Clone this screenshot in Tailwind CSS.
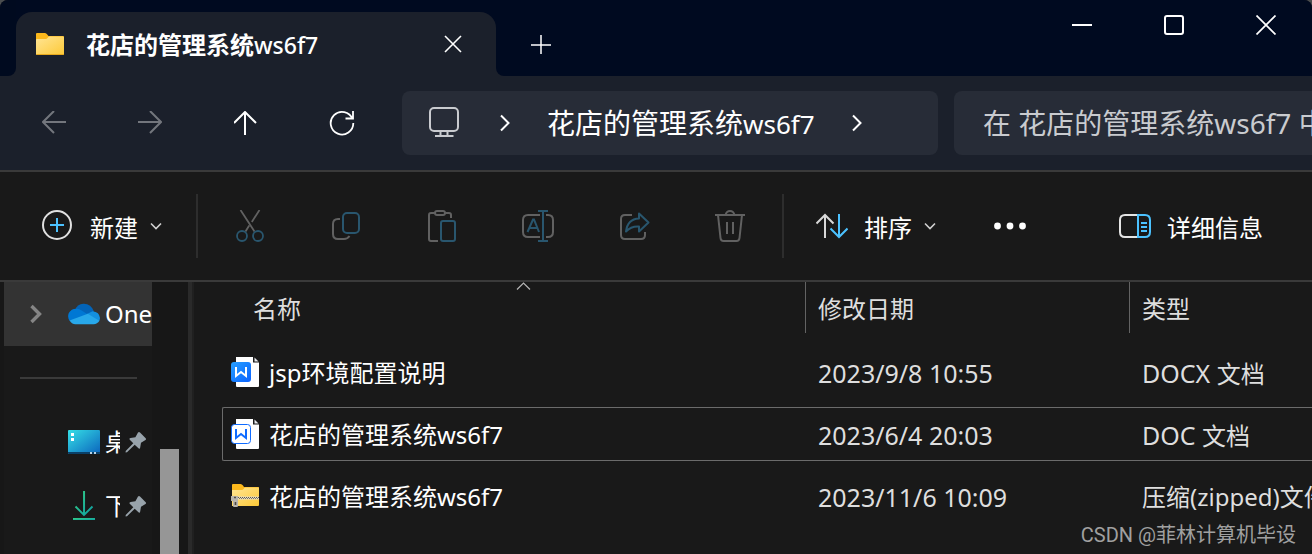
<!DOCTYPE html>
<html lang="zh-CN">
<head>
    <meta charset="UTF-8" />
    <meta name="viewport" content="width=device-width, initial-scale=1" />
    <title>花店的管理系统ws6f7</title>
    <script src="https://cdn.jsdelivr.net/npm/@tailwindcss/browser@4"></script>
</head>
<body class="h-screen overflow-hidden bg-[#4a4d4f] font-['Noto_Sans','Noto_Sans_CJK_SC',sans-serif] text-2xl text-white">
    <!-- shared icons -->
    <svg class="absolute h-0 w-0">
        <defs>
            <linearGradient id="folder-fill" x1="0" y1="0" x2="1" y2="1">
                <stop offset="0" stop-color="#ffe595" />
                <stop offset="1" stop-color="#fdc937" />
            </linearGradient>
            <linearGradient id="word-fill" x1="0" y1="0" x2="1" y2="1">
                <stop offset="0" stop-color="#27a0ff" />
                <stop offset="1" stop-color="#0a62ff" />
            </linearGradient>
            <linearGradient id="desktop-fill" x1="0" y1="0" x2="1" y2="1">
                <stop offset="0" stop-color="#35dfe6" />
                <stop offset="1" stop-color="#0b64bd" />
            </linearGradient>
            <linearGradient id="download-fill" x1="0" y1="0" x2="1" y2="1">
                <stop offset="0" stop-color="#35cf83" />
                <stop offset="1" stop-color="#0d9fa5" />
            </linearGradient>
        </defs>
        <symbol id="icon-pin" viewBox="0 0 22 22">
            <path d="M13 1.5Q14 .6 15 1.5L20.7 7.2Q21.6 8.2 20.5 9L16 11.8L15.2 16.4Q14.8 18.6 13.2 17L9.7 13.7L2 21.3L.6 21.4L.7 20L8.3 12.3L5 9Q3.6 7.6 5.6 7L10.4 6.2Z" fill="#98a3ab" />
        </symbol>
        <symbol id="icon-down" viewBox="0 0 12 8">
            <path d="M1 1.5L6 6.5L11 1.5" fill="none" stroke="#d0d0d0" stroke-width="1.6" />
        </symbol>
    </svg>

    <div class="flex h-full flex-col overflow-hidden rounded-t-lg bg-[#191919]">
        <!-- title bar -->
        <header class="flex h-[76px] shrink-0 bg-[#1b202b]">
            <div class="w-4 rounded-br-lg bg-[#000a1f]"></div>
            <div class="w-[480px] bg-[#000a20] pt-3">
                <div class="flex h-16 items-center rounded-t-2xl bg-[#1b202b] pl-5">
                    <svg class="h-6 w-7 shrink-0" viewBox="0 0 28 24">
                        <path d="M0 2Q0 1 1 1H8.5Q10 1 11 2.2L12.5 4H27Q28 4 28 5V9H0Z" fill="#fcb81c" />
                        <path d="M0 8Q0 7 1 7H9.5Q11 7 12 5.500Q12.600 4.600 13.500 4.600H27Q28 4.600 28 5.600V22Q28 23 27 23H1Q0 23 0 22Z" fill="url(#folder-fill)" />
                        <path d="M.5 22.500H27.500" stroke="#e8a91d" />
                    </svg>
                    <span class="ml-[22px] flex-1 pt-0.5 font-bold leading-8 whitespace-nowrap">花店的管理系统<span class="text-[23px] font-medium">ws6f7</span></span>
                    <button class="mr-3 flex h-12 w-[62px] items-center justify-center" aria-label="关闭标签页">
                        <svg class="h-[18px] w-[18px]" viewBox="0 0 18 18"><path d="M1 1L17 17M17 1L1 17" stroke="#fff" stroke-width="1.600" /></svg>
                    </button>
                </div>
            </div>
            <div class="flex flex-1 items-start rounded-bl-lg bg-[#000a20]">
                <button class="mt-3 flex h-16 w-[90px] items-center justify-center" aria-label="新标签页">
                    <svg class="h-5 w-5" viewBox="0 0 20 20"><path d="M10 1V20M0 11H20" stroke="#fff" stroke-width="1.500" /></svg>
                </button>
                <div class="ml-auto flex h-[50px]">
                    <button class="flex w-[92px] items-center justify-center" aria-label="最小化">
                        <svg class="h-5 w-5" viewBox="0 0 20 20"><path d="M0 10H20" stroke="#fff" stroke-width="2" /></svg>
                    </button>
                    <button class="flex w-[92px] items-center justify-center" aria-label="最大化">
                        <svg class="h-5 w-5" viewBox="0 0 20 20"><rect x="1" y="1" width="18" height="18" rx="2" fill="none" stroke="#fff" stroke-width="2" /></svg>
                    </button>
                    <button class="flex w-[92px] items-center justify-center" aria-label="关闭">
                        <svg class="h-5 w-5" viewBox="0 0 20 20"><path d="M.5 .5L19.500 19.500M19.500 .5L.5 19.500" stroke="#fff" stroke-width="1.700" /></svg>
                    </button>
                </div>
            </div>
        </header>

        <!-- navigation -->
        <nav class="flex h-[94px] shrink-0 items-center bg-[#1b202b] pl-1.5">
            <button class="flex h-16 w-24 shrink-0 items-center justify-center" aria-label="后退" disabled>
                <svg class="h-6 w-6" viewBox="0 0 24 24"><path d="M24 11H1M12 0L1 11L12 22" fill="none" stroke="#73767d" stroke-width="2" /></svg>
            </button>
            <button class="flex h-16 w-24 shrink-0 items-center justify-center" aria-label="前进" disabled>
                <svg class="h-6 w-6" viewBox="0 0 24 24"><path d="M0 11H23M12 0L23 11L12 22" fill="none" stroke="#73767d" stroke-width="2" /></svg>
            </button>
            <button class="flex h-16 w-24 shrink-0 items-center justify-center" aria-label="向上">
                <svg class="h-6 w-6" viewBox="0 0 24 24"><path d="M11 24V1M0 12L11 1L22 12" fill="none" stroke="#fff" stroke-width="2" /></svg>
            </button>
            <button class="flex h-16 w-24 shrink-0 items-center justify-center" aria-label="刷新">
                <svg class="h-[26px] w-[26px]" viewBox="0 0 26 26"><path d="M23.500 9A11.300 11.300 0 1 0 24.300 13M24 1V8.500H16.500" fill="none" stroke="#fff" stroke-width="1.800" /></svg>
            </button>
            <div class="ml-3 flex h-16 min-w-0 flex-1 items-center rounded-lg bg-[#272c37] pl-[27px]">
                <svg class="h-8 w-[30px] shrink-0" viewBox="0 0 30 32" fill="none" stroke="#c9cbcf" stroke-width="2">
                    <rect x="1" y="1" width="28" height="23" rx="4" />
                    <path d="M11.500 24V28.500M18.500 24V28.500M6 29H24.500" />
                </svg>
                <svg class="ml-10 h-[18px] w-3 shrink-0" viewBox="0 0 12 18"><path d="M2 1.500L9.500 9L2 16.500" fill="none" stroke="#fff" stroke-width="2" /></svg>
                <a href="#" class="ml-9 text-[28px] leading-10 whitespace-nowrap">花店的管理系统<span class="text-[26px]">ws6f7</span></a>
                <svg class="ml-9 h-[18px] w-3 shrink-0" viewBox="0 0 12 18"><path d="M2 1.500L9.500 9L2 16.500" fill="none" stroke="#fff" stroke-width="2" /></svg>
            </div>
            <input type="text" aria-label="搜索" placeholder="在 花店的管理系统ws6f7 中搜索" class="ml-4 h-16 w-[358px] shrink-0 rounded-l-lg bg-[#272c37] pl-[29px] text-[28px] placeholder-[#c9cbcf] outline-none" />
        </nav>

        <!-- toolbar -->
        <div class="flex h-28 shrink-0 items-center border-y-2 border-[#3a3a3a] bg-[#191919]">
            <button class="flex h-16 w-[196px] shrink-0 items-center pl-[42px]">
                <svg class="h-8 w-[30px]" viewBox="0 0 30 32" fill="none">
                    <circle cx="15" cy="15" r="14" stroke="#e0e0e0" stroke-width="2" />
                    <path d="M15 8V22M8 15H22" stroke="#4cc2ff" stroke-width="2" />
                </svg>
                <span class="ml-[18px] pt-1 leading-8">新建</span>
                <svg class="ml-3 h-2 w-3"><use href="#icon-down" /></svg>
            </button>
            <div class="mr-1 h-16 w-0.5 shrink-0 bg-[#2d2d2d]"></div>
            <button class="flex h-16 w-24 shrink-0 items-center justify-center" aria-label="剪切" disabled>
                <svg class="h-8 w-8" viewBox="0 0 32 32" fill="none" stroke-width="1.800">
                    <path d="M6.500 0L20.500 21.500M25.500 0L17.800 12M15.200 15.500L11.500 21.500" stroke="#616161" />
                    <circle cx="8" cy="26" r="5" stroke="#29566e" />
                    <circle cx="24" cy="26" r="5" stroke="#29566e" />
                </svg>
            </button>
            <button class="flex h-16 w-24 shrink-0 items-center justify-center" aria-label="复制" disabled>
                <svg class="h-8 w-8" viewBox="0 0 32 32" fill="none" stroke-width="2">
                    <path d="M10 9H8Q3 9 3 14V24Q3 29 8 29H14Q17.500 29 19.500 26" stroke="#616161" />
                    <rect x="13" y="3" width="16" height="20" rx="4" stroke="#29566e" />
                </svg>
            </button>
            <button class="flex h-16 w-24 shrink-0 items-center justify-center" aria-label="粘贴" disabled>
                <svg class="h-8 w-8" viewBox="0 0 32 32" fill="none" stroke-width="2">
                    <path d="M9 3H5Q3 3 3 5V29Q3 31 5 31H12M19 3H23Q25 3 25 5V8" stroke="#616161" />
                    <rect x="9" y="1" width="10" height="4" rx="2" stroke="#616161" />
                    <rect x="15" y="11" width="14" height="20" rx="2" stroke="#29566e" />
                </svg>
            </button>
            <button class="flex h-16 w-24 shrink-0 items-center justify-center" aria-label="重命名" disabled>
                <svg class="h-8 w-8" viewBox="0 0 32 32" fill="none" stroke-width="2">
                    <path d="M18 5H6Q1 5 1 10V22Q1 27 6 27H18M24 5H26Q31 5 31 10V22Q31 27 26 27H24" stroke="#616161" />
                    <path d="M21 1V31M16 1H26M16 31H26" stroke="#29566e" />
                    <path d="M5.500 22L11 9.500H12L17 22M7.500 18H15.500" stroke="#29566e" />
                </svg>
            </button>
            <button class="flex h-16 w-24 shrink-0 items-center justify-center" aria-label="共享" disabled>
                <svg class="h-8 w-8" viewBox="0 0 32 32" fill="none" stroke-width="2">
                    <path d="M14 5H7Q3 5 3 9V25Q3 29 7 29H23Q27 29 27 25V22" stroke="#616161" />
                    <path d="M21 3.500L30.500 12.500L21 21.500V16.500Q13 16 8 21.500Q9.500 9 21 8.500Z" stroke="#29566e" stroke-linejoin="round" />
                </svg>
            </button>
            <button class="flex h-16 w-24 shrink-0 items-center justify-center" aria-label="删除" disabled>
                <svg class="h-8 w-8" viewBox="0 0 32 32" fill="none" stroke="#616161" stroke-width="2">
                    <path d="M1 5H31M11.500 5Q12.500 1 16 1Q19.500 1 20.500 5M4 5L6.500 28Q6.800 31 9.500 31H22.500Q25.200 31 25.500 28L28 5M13 12V24M19 12V24" />
                </svg>
            </button>
            <div class="ml-1 h-16 w-0.5 shrink-0 bg-[#2d2d2d]"></div>
            <button class="ml-8 flex h-16 shrink-0 items-center">
                <svg class="h-8 w-8" viewBox="0 0 32 32" fill="none" stroke-width="2">
                    <path d="M9 28V5M.5 13.500L9 5L17.500 13.500" stroke="#d8d8d8" />
                    <path d="M23 4V27M14.500 18.500L23 27L31.500 18.500" stroke="#4cc2ff" />
                </svg>
                <span class="ml-4 pt-1 leading-8">排序</span>
                <svg class="ml-3 h-2 w-3"><use href="#icon-down" /></svg>
            </button>
            <button class="ml-[50px] flex h-16 w-12 shrink-0 items-center justify-center" aria-label="查看更多">
                <svg class="h-2 w-8" viewBox="0 0 32 8" fill="#fff"><circle cx="3.500" cy="4" r="3.400" /><circle cx="16" cy="4" r="3.400" /><circle cx="28.500" cy="4" r="3.400" /></svg>
            </button>
            <button class="mr-[49px] ml-auto flex h-16 shrink-0 items-center">
                <svg class="h-8 w-8" viewBox="0 0 32 32" fill="none" stroke-width="2">
                    <path d="M19 5H6Q1 5 1 10V22Q1 27 6 27H19" stroke="#e4e4e4" />
                    <path d="M19 5H26Q31 5 31 10V22Q31 27 26 27H19ZM22 13H28M22 17H28M22 21H28" stroke="#4cc2ff" />
                </svg>
                <span class="ml-4 pt-1 leading-8">详细信息</span>
            </button>
        </div>

        <div class="flex min-h-0 flex-1">
            <!-- sidebar -->
            <aside class="flex w-[188px] shrink-0 overflow-hidden bg-[#171717] pl-1">
                <div class="w-[148px] overflow-hidden bg-[#191919]">
                    <a href="#" class="flex h-16 items-center bg-[#333333] pl-6">
                        <svg class="h-5 w-4 shrink-0" viewBox="0 0 16 20"><path d="M3.500 2L11.500 10L3.500 18" fill="none" stroke="#858585" stroke-width="3.400" /></svg>
                        <svg class="ml-6 h-[22px] w-8 shrink-0" viewBox="0 0 32 22">
                            <path d="M7 7Q9 1 15.500 .7Q23 .5 26 8.500L19 13Z" fill="#0364b8" />
                            <path d="M1.800 18Q-1 14.500 .8 10Q3.500 5.200 9.500 5.800Q12 6.200 14 7.800L20 11.500L8 17Z" fill="#0078d4" />
                            <path d="M19 11L24.500 8.200Q31.500 9 32 15Q31.800 17 31 18.500L20 14Z" fill="#1490df" />
                            <path d="M1.600 17.500L19.800 10.700L31.300 17.800Q29.500 21.200 25.500 21.300H7.500Q3.500 21 1.600 17.500Z" fill="#28a8ea" />
                        </svg>
                        <span class="ml-[5px] leading-8 whitespace-nowrap">OneDrive</span>
                    </a>
                    <div class="flex h-16 items-center pr-[15px] pl-4"><div class="h-0.5 w-full bg-[#3a3a3a]"></div></div>
                    <a href="#" class="flex h-16 items-center pl-16">
                        <svg class="h-6 w-8 shrink-0" viewBox="0 0 32 24">
                            <rect width="32" height="24" rx="1" fill="url(#desktop-fill)" />
                            <path d="M0 22H32V23Q32 24 31 24H1Q0 24 0 23Z" fill="#0a4068" />
                            <path d="M3 3H6V6H3ZM3 8H6V11H3Z" fill="#fff" />
                            <path d="M22 22H24V24H22ZM26 22H28V24H26Z" fill="#b9d3e6" />
                        </svg>
                        <span class="ml-[5px] w-[15px] shrink-0 overflow-hidden leading-8 whitespace-nowrap">桌面</span>
                        <svg class="ml-[5px] h-[22px] w-[22px] shrink-0"><use href="#icon-pin" /></svg>
                    </a>
                    <a href="#" class="flex h-16 items-center pl-16">
                        <svg class="h-8 w-8 shrink-0" viewBox="0 0 32 32" fill="none">
                            <path d="M16 2V25H16.100V2ZM7.500 16.500L16 25L24.500 16.500" stroke="url(#download-fill)" stroke-width="1.900" />
                            <path d="M5 28H27V30H5Z" fill="url(#download-fill)" />
                        </svg>
                        <span class="ml-[5px] w-[15px] shrink-0 overflow-hidden leading-8 whitespace-nowrap">下载</span>
                        <svg class="ml-[5px] h-[22px] w-[22px] shrink-0"><use href="#icon-pin" /></svg>
                    </a>
                </div>
                <!-- scrollbar -->
                <div class="ml-2 w-[19px] pt-[167px]"><div class="h-full bg-[#969696]"></div></div>
            </aside>
            <div class="w-1.5 shrink-0 border-l-4 border-[#2a2a2a] bg-[#202020]"></div>

            <!-- file list -->
            <main class="relative min-w-0 flex-1 overflow-hidden pl-7">
                <svg class="absolute top-0 left-[322px] h-2 w-4" viewBox="0 0 16 8"><path d="M1 7.500L7.500 1L14 7.500" fill="none" stroke="#b5b5b5" stroke-width="1.200" /></svg>
                <table class="w-full table-fixed border-separate border-spacing-0 whitespace-nowrap text-[#dedede]">
                    <colgroup>
                        <col class="w-[584px]" />
                        <col class="w-[324px]" />
                        <col />
                    </colgroup>
                    <thead>
                        <tr class="h-[59px] text-left">
                            <th class="p-0 align-top font-normal"><div class="flex h-[51px] items-center border-r border-[#636363] pt-0.5 pl-[31px] leading-8">名称</div></th>
                            <th class="p-0 align-top font-normal"><div class="flex h-[51px] items-center border-r border-[#636363] pt-0.5 pl-3 leading-8">修改日期</div></th>
                            <th class="p-0 align-top font-normal"><div class="flex h-[51px] items-center pt-0.5 pl-3 leading-8">类型</div></th>
                        </tr>
                    </thead>
                    <tbody>
                        <tr class="h-[62px]">
                            <td class="p-0 text-white">
                                <div class="flex h-[54px] items-center border border-transparent pl-2">
                                    <svg class="h-8 w-7 shrink-0" viewBox="0 0 28 32">
                                        <path d="M5 1H22V6.500H28V30Q28 31 27 31H6Q5 31 5 30Z" fill="#fff" />
                                        <path d="M23.500 1.500L27.500 5.500H23.500Z" fill="#e8eaee" />
                                        <rect y="6" width="20" height="20" rx="3" fill="url(#word-fill)" />
                                        <path d="M5 11V20L10 16L15 20V11" fill="none" stroke="#fff" stroke-width="2" />
                                    </svg>
                                    <a href="#" class="ml-2.5 pt-0.5 leading-8">jsp环境配置说明</a>
                                </div>
                            </td>
                            <td class="p-0"><div class="flex h-[54px] items-center pt-0.5 pl-3 text-[25px] leading-8">2023/9/8 10:55</div></td>
                            <td class="p-0"><div class="h-[54px] pt-3 pl-3 leading-8"><span class="text-[25px]">DOCX </span>文档</div></td>
                        </tr>
                        <!-- focused row -->
                        <tr class="h-[62px]">
                            <td class="p-0 text-white">
                                <div class="flex h-[54px] items-center rounded-l-xs border border-r-0 border-[#6b6b6b] pl-2">
                                    <svg class="h-8 w-7 shrink-0" viewBox="0 0 28 32">
                                        <path d="M5 1H22V6.500H28V30Q28 31 27 31H6Q5 31 5 30Z" fill="#fff" />
                                        <path d="M23.500 1.500L27.500 5.500H23.500Z" fill="#e8eaee" />
                                        <rect x=".5" y="6.500" width="19" height="19" rx="3" fill="#fff" stroke="#0f6bff" />
                                        <path d="M5 11V20L10 16L15 20V11" fill="none" stroke="#0f6bff" stroke-width="2" />
                                    </svg>
                                    <a href="#" class="ml-2.5 pt-0.5 leading-8">花店的管理系统ws6f7</a>
                                </div>
                            </td>
                            <td class="p-0"><div class="flex h-[54px] items-center border-y border-[#6b6b6b] pt-0.5 pl-3 text-[25px] leading-8">2023/6/4 20:03</div></td>
                            <td class="p-0"><div class="h-[54px] border-y border-[#6b6b6b] pt-[11px] pl-3 leading-8"><span class="text-[25px]">DOC </span>文档</div></td>
                        </tr>
                        <tr class="h-[62px]">
                            <td class="p-0 text-white">
                                <div class="flex h-[54px] items-center border border-transparent pl-2">
                                    <svg class="h-6 w-7 shrink-0" viewBox="0 0 28 24">
                                        <path d="M1 1Q1 0 2 0H9.500Q11 0 12 1.500L13 3H27Q28 3 28 4V8H1Z" fill="#fcb81c" />
                                        <path d="M1 6H10.500Q12 6 13 4.500Q13.500 3.500 14.500 3.500H28V21Q28 22 27 22H1Z" fill="url(#folder-fill)" />
                                        <path d="M5 12.500H28V15.500H5Z" fill="#e6dcc0" />
                                        <path d="M7 13.500H28" stroke="#5d594f" stroke-dasharray="1 1" />
                                        <path d="M8 14.500H28" stroke="#777268" stroke-dasharray="1 1" />
                                        <path d="M0 12H7V22Q7 23 6 23H3Q2 23 2 22V17H0Z" fill="#b9b5ad" />
                                        <path d="M3 13.500H5M4.500 18V21" stroke="#4f4b45" stroke-width="1.600" />
                                    </svg>
                                    <a href="#" class="ml-2.5 pt-0.5 leading-8">花店的管理系统ws6f7</a>
                                </div>
                            </td>
                            <td class="p-0"><div class="flex h-[54px] items-center pt-0.5 pl-3 text-[25px] leading-8">2023/11/6 10:09</div></td>
                            <td class="p-0"><div class="h-[54px] overflow-hidden pt-3 pl-3 leading-8">压缩(zipped)文件夹</div></td>
                        </tr>
                    </tbody>
                </table>
                <div class="absolute right-4 bottom-[3px] font-['Roboto','Noto_Sans_CJK_SC',sans-serif] text-xl leading-8 text-[#a0a0a0]">CSDN @菲林计算机毕设</div>
            </main>
        </div>
    </div>
</body>
</html>
